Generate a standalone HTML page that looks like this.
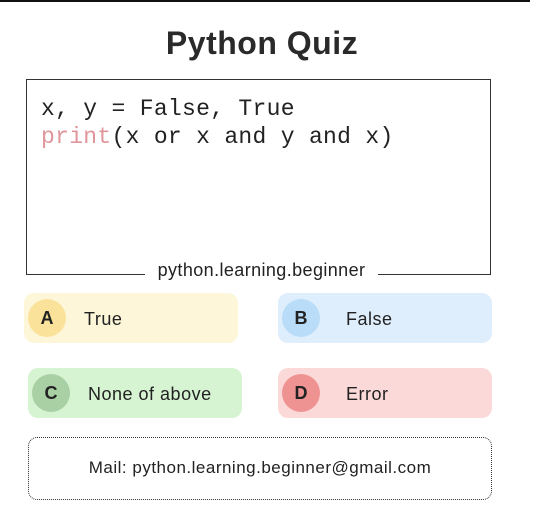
<!DOCTYPE html>
<html><head><style>
*{margin:0;padding:0;box-sizing:border-box}
body{width:538px;height:528px;background:#fff;position:relative;overflow:hidden;font-family:"Liberation Sans",sans-serif;color:#222}
.a{position:absolute}
.opt{position:absolute;width:214px;height:50px;border-radius:10px}
.c{position:absolute;left:4px;top:6px;width:38px;height:38px;border-radius:50%;font-weight:bold;font-size:18px;text-align:center;line-height:38px;color:#222}
.t{position:absolute;left:60px;top:0;line-height:52px;font-size:18px;letter-spacing:0.5px;color:#222}
</style></head><body>
<div class="a" style="left:0;top:0;width:530px;height:2px;background:#111"></div>
<div class="a" style="left:0;top:25px;width:524px;text-align:center;font-weight:bold;font-size:32px;letter-spacing:0.5px;color:#2a2a2a">Python Quiz</div>
<div class="a" style="left:26px;top:79px;width:465px;height:196px;border:1.5px solid #333"></div>
<div class="a" style="left:41px;top:95px;font-family:'Liberation Mono',monospace;font-size:23px;letter-spacing:0.3px;line-height:28px;color:#222;white-space:pre">x, y = False, True
<span style="color:#e0969a">print</span>(x or x and y and x)</div>
<div class="a" style="left:145px;top:258px;width:233px;height:24px;background:#fff;text-align:center;font-size:18px;letter-spacing:0.4px;line-height:24px;color:#222">python.learning.beginner</div>
<div class="opt" style="left:24px;top:293px;background:#fdf6d9"><div class="c" style="background:#fbe29a">A</div><div class="t">True</div></div>
<div class="opt" style="left:278px;top:293px;background:#dfeefc"><div class="c" style="background:#b9dcf8">B</div><div class="t" style="left:68px">False</div></div>
<div class="opt" style="left:28px;top:368px;background:#d6f3d2"><div class="c" style="background:#a9cfa5">C</div><div class="t">None of above</div></div>
<div class="opt" style="left:278px;top:368px;background:#fcd9d9"><div class="c" style="background:#ef9292">D</div><div class="t" style="left:68px">Error</div></div>
<div class="a" style="left:28px;top:437px;width:464px;height:63px;border:1.5px dotted #333;border-radius:9px;text-align:center;line-height:60px;font-size:17px;letter-spacing:0.5px;color:#222">Mail: python.learning.beginner@gmail.com</div>
</body></html>
